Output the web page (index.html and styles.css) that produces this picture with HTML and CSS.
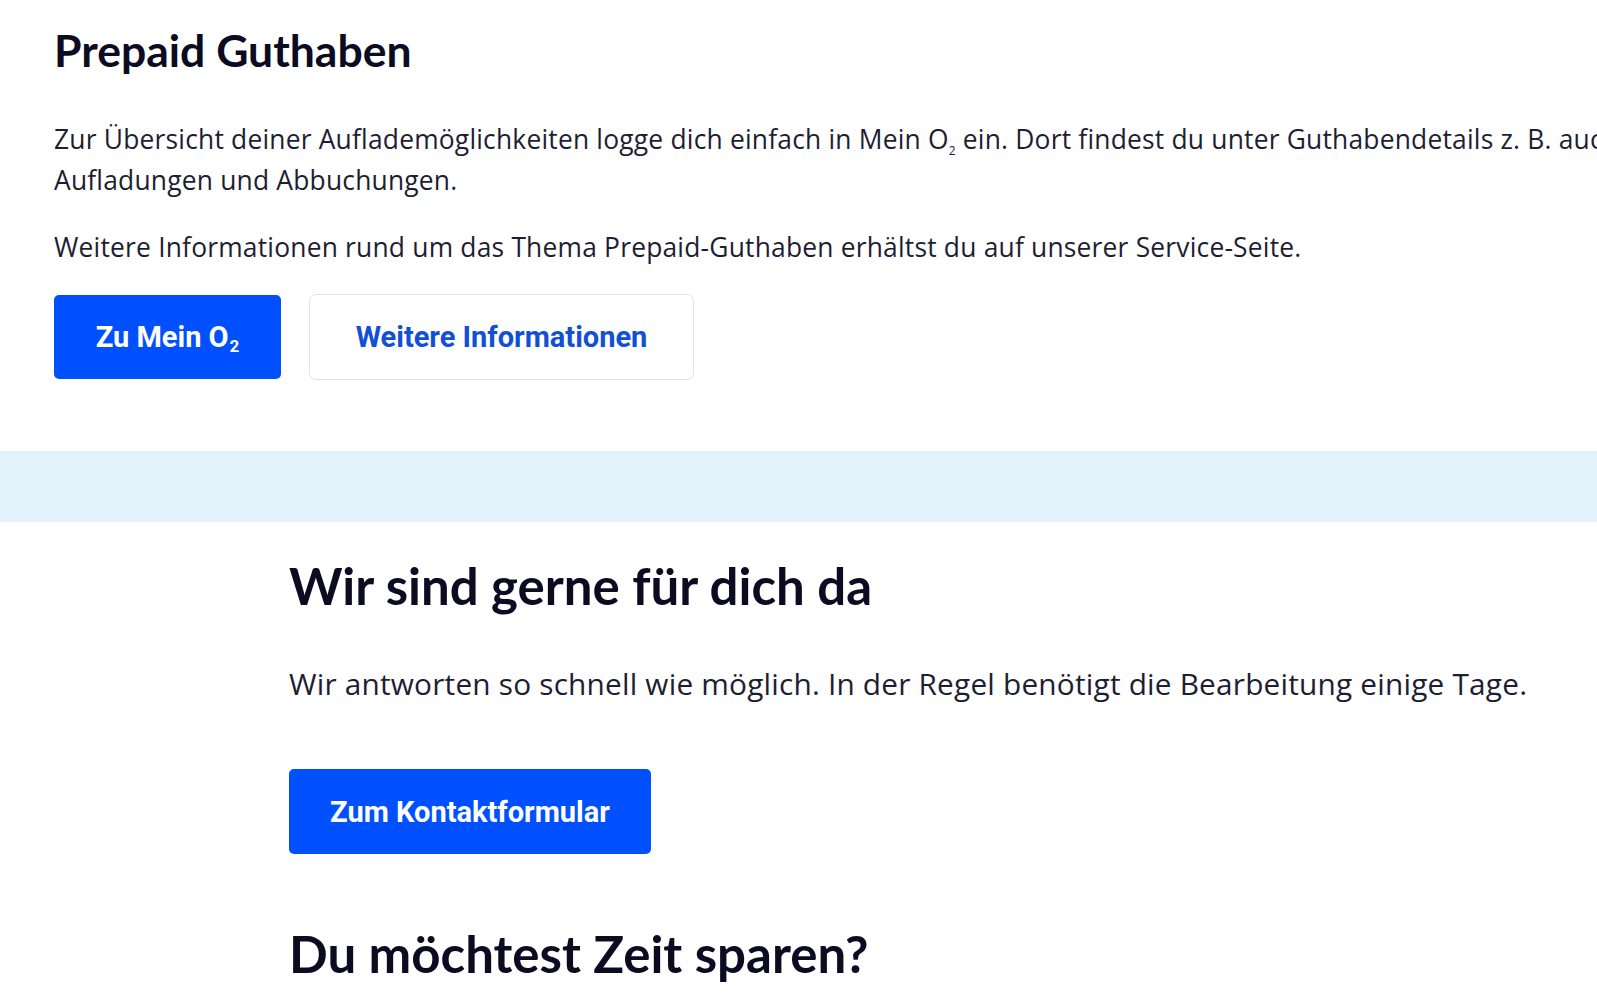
FILE: index.html
```html
<!DOCTYPE html>
<html lang="de">
<head>
<meta charset="utf-8">
<title>Prepaid Guthaben</title>
<link rel="stylesheet" href="styles.css">
</head>
<body>
<main class="page">
  <section class="prepaid">
    <h2 class="title">Prepaid Guthaben</h2>
    <p class="text">Zur Übersicht deiner Auflademöglichkeiten logge dich einfach in Mein O<sub class="sub">2</sub> ein. Dort findest du unter Guthabendetails z. B. auch deine letzten<br>Aufladungen und Abbuchungen.</p>
    <p class="text text-gap">Weitere Informationen rund um das Thema Prepaid-Guthaben erhältst du auf unserer Service-Seite.</p>
    <div class="actions">
      <a class="btn btn-primary btn-mein">Zu Mein O<span class="btn-sub">2</span></a>
      <a class="btn btn-secondary">Weitere Informationen</a>
    </div>
  </section>
  <div class="band"></div>
  <section class="contact">
    <h2 class="title-lg">Wir sind gerne für dich da</h2>
    <p class="text-lg">Wir antworten so schnell wie möglich. In der Regel benötigt die Bearbeitung einige Tage.</p>
    <div class="actions actions-contact">
      <a class="btn btn-primary btn-contact">Zum Kontaktformular</a>
    </div>
    <h2 class="title-lg title-save">Du möchtest Zeit sparen?</h2>
  </section>
</main>
</body>
</html>
```

FILE: styles.css
```css
html, body {
  margin: 0;
  padding: 0;
  background: #ffffff;
  overflow: hidden;
}
body {
  font-family: "Open Sans", "Noto Sans", sans-serif;
  color: #1b1b30;
}
.page {
  width: 1597px;
  height: 998px;
  overflow: hidden;
}
.prepaid {
  padding: 24px 0 0 54px;
  width: 1900px;
}
.title {
  margin: 0;
  font-family: Lato, "Noto Sans", sans-serif;
  font-size: 44.5px;
  line-height: 52px;
  font-weight: 700;
  color: #0b0b22;
}
.text {
  margin: 43px 0 0 0;
  font-size: 26.4px;
  line-height: 41px;
  font-weight: 400;
  letter-spacing: 0.2px;
  color: #1e1e32;
  white-space: nowrap;
}
.text-gap {
  margin-top: 26px;
}
.sub {
  font-size: 12px;
  vertical-align: -6px;
  line-height: 0;
}
.actions {
  display: flex;
  gap: 28px;
  margin-top: 27px;
}
.btn {
  box-sizing: border-box;
  display: flex;
  align-items: center;
  justify-content: center;
  height: 84px;
  border-radius: 5px;
  font-family: Roboto, "Noto Sans", sans-serif;
  font-weight: 700;
  font-size: 29px;
  text-decoration: none;
}
.btn-primary {
  background: #0050ff;
  color: #ffffff;
}
.btn-mein {
  width: 227px;
}
.btn-sub {
  position: relative;
  top: 9px;
  font-size: 17px;
  margin-left: 1px;
}
.btn-secondary {
  width: 385px;
  height: 86px;
  margin-top: -1px;
  background: #ffffff;
  color: #1150d6;
  border: 1.5px solid #dfe2e8;
  border-radius: 7px;
}
.band {
  margin-top: 71px;
  height: 71px;
  background: #e1f2fa;
}
.contact {
  padding: 34px 0 0 289px;
}
.title-lg {
  margin: 0;
  font-family: Lato, "Noto Sans", sans-serif;
  font-size: 51px;
  line-height: 60px;
  font-weight: 700;
  color: #0b0b22;
}
.text-lg {
  margin: 48px 0 0 0;
  font-size: 29.8px;
  line-height: 40px;
  font-weight: 400;
  letter-spacing: 0.2px;
  color: #1e1e32;
}
.actions-contact {
  margin-top: 65px;
}
.btn-contact {
  width: 362px;
  height: 85px;
}
.title-save {
  margin-top: 70px;
}
```
